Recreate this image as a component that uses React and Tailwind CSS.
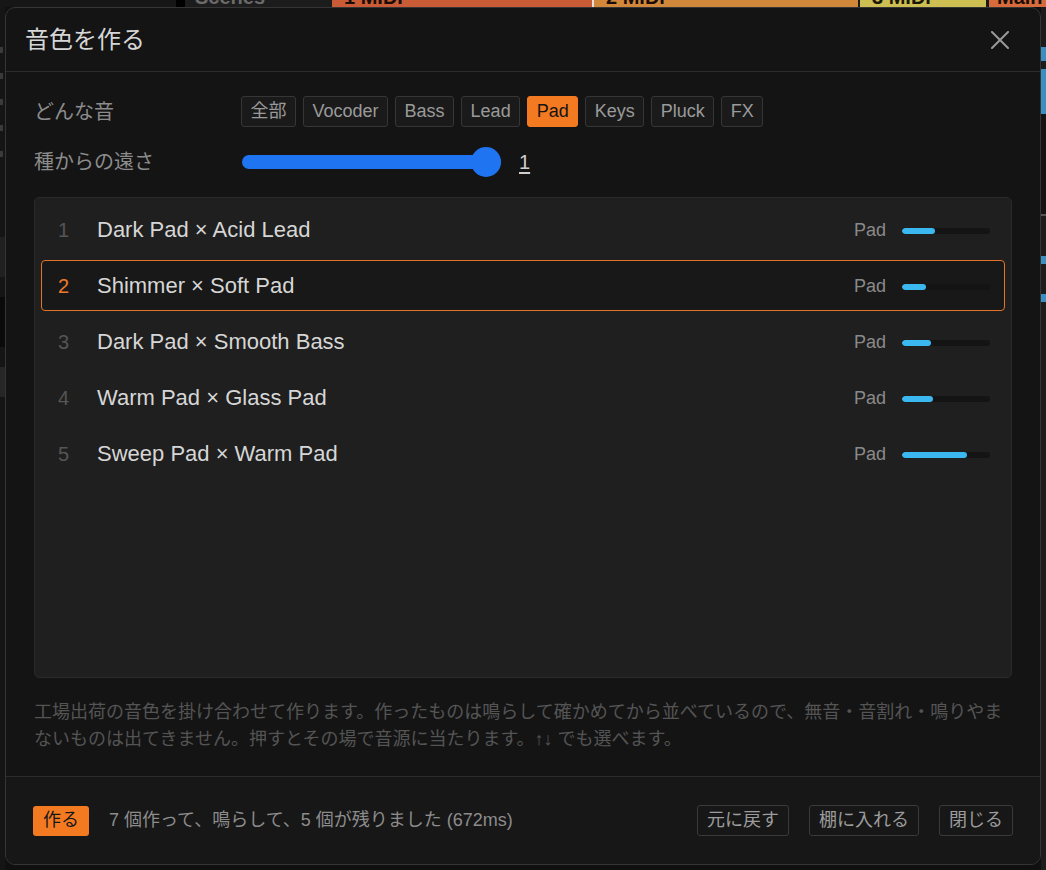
import React from "react";

const chips = ["全部", "Vocoder", "Bass", "Lead", "Pad", "Keys", "Pluck", "FX"];

const rows = [
  { n: 1, name: "Dark Pad × Acid Lead", fill: 33 },
  { n: 2, name: "Shimmer × Soft Pad", fill: 24, sel: true },
  { n: 3, name: "Dark Pad × Smooth Bass", fill: 29 },
  { n: 4, name: "Warm Pad × Glass Pad", fill: 31 },
  { n: 5, name: "Sweep Pad × Warm Pad", fill: 65 },
];

function TopStrip() {
  return (
    <div className="flex h-[7px] overflow-hidden bg-[#151515]">
      <div className="w-[176px] bg-[#161616]" />
      <div className="w-[9px] bg-black" />
      <div className="w-[147px] bg-[#1c1c1c] pl-[10px]">
        <div className="mt-[-13px] text-[20px] font-bold leading-[20px] text-[#6a6a6a]">Scenes</div>
      </div>
      <div className="w-[260px] bg-[#c95b37] pl-[12px]">
        <div className="mt-[-13px] text-[20px] font-bold leading-[20px] text-[#1a0d08]">1 MIDI</div>
      </div>
      <div className="w-[2px] bg-[#e8e0d8]" />
      <div className="w-[264px] bg-[#d2883b] pl-[12px]">
        <div className="mt-[-13px] text-[20px] font-bold leading-[20px] text-[#1a0d08]">2 MIDI</div>
      </div>
      <div className="w-[2px] bg-[#1a1a1a]" />
      <div className="w-[126px] bg-[#cdbf52] pl-[12px]">
        <div className="mt-[-13px] text-[20px] font-bold leading-[20px] text-[#1a1608]">3 MIDI</div>
      </div>
      <div className="w-[3px] bg-[#1a1a1a]" />
      <div className="flex-1 bg-[#d86b3b] pl-[8px]">
        <div className="mt-[-13px] text-[20px] font-bold leading-[20px] text-[#1a0d08]">Main</div>
      </div>
    </div>
  );
}

function SideStrips() {
  return (
    <div className="flex flex-1">
      <div className="flex w-[5px] flex-col gap-[20px] bg-[#151515] pt-[40px]">
        <div className="h-[6px] w-[3px] bg-[#3a3a3a]" />
        <div className="h-[6px] w-[3px] bg-[#3a3a3a]" />
        <div className="h-[6px] w-[3px] bg-[#3a3a3a]" />
        <div className="h-[6px] w-[3px] bg-[#3a3a3a]" />
        <div className="h-[6px] w-[3px] bg-[#3a3a3a]" />
        <div className="mt-[60px] h-[40px] w-[5px] bg-[#202020]" />
        <div className="h-[50px] w-[5px] bg-[#0a0a0a]" />
        <div className="h-[30px] w-[5px] bg-[#262626]" />
      </div>
      <div className="flex-1" />
      <div className="flex w-[5px] flex-col bg-[#1c1c1c]">
        <div className="h-[40px]" />
        <div className="h-[14px] bg-[#3a8fc0]" />
        <div className="h-[8px]" />
        <div className="h-[45px] bg-[#3a8fc0]" />
        <div className="h-[100px] bg-[#141414]" />
        <div className="h-[2px] bg-[#555]" />
        <div className="h-[40px]" />
        <div className="h-[8px] bg-[#3a8fc0]" />
        <div className="h-[30px]" />
        <div className="h-[8px] bg-[#3a8fc0]" />
      </div>
    </div>
  );
}

function CloseIcon() {
  return (
    <svg width="20" height="18" viewBox="0 0 20 18" fill="none" stroke="#9a9a9a" strokeWidth="2" strokeLinecap="round">
      <line x1="2" y1="1" x2="18" y2="17" />
      <line x1="18" y1="1" x2="2" y2="17" />
    </svg>
  );
}

export default function App() {
  return (
    <div className="relative flex h-[870px] w-[1046px] flex-col overflow-hidden bg-[#101010] font-['Liberation_Sans','Noto_Sans_CJK_JP',sans-serif]">
      <TopStrip />
      <SideStrips />

      <div className="absolute left-[5px] top-[7px] flex h-[858px] w-[1036px] flex-col overflow-hidden rounded-[10px] border border-[#353535] bg-[#141414]">
        {/* header */}
        <div className="flex h-[64px] shrink-0 items-center justify-between border-b border-[#2c2c2c] pl-[19px] pr-[30px]">
          <div className="text-[24px] leading-none text-[#d6d6d6]">音色を作る</div>
          <CloseIcon />
        </div>

        {/* body */}
        <div className="flex flex-1 flex-col px-[28px] pt-[24px]">
          <div className="flex h-[31px] items-center">
            <div className="w-[207px] text-[20px] text-[#8c8c8c]">どんな音</div>
            <div className="flex gap-[7px]">
              {chips.map((c) => (
                <div
                  key={c}
                  className={
                    c === "Pad"
                      ? "flex h-[31px] items-center rounded-[3px] border border-[#f47a22] bg-[#f47a22] px-[8.5px] text-[18px] text-[#141414]"
                      : "flex h-[31px] items-center rounded-[3px] border border-[#363636] bg-[#1a1a1a] px-[8.5px] text-[18px] text-[#9a9a9a]"
                  }
                >
                  {c}
                </div>
              ))}
            </div>
          </div>

          <div className="mt-[20px] flex h-[30px] items-center">
            <div className="w-[208px] text-[20px] text-[#8c8c8c]">種からの遠さ</div>
            <div className="relative flex h-[30px] w-[259px] items-center">
              <div className="h-[14px] w-full rounded-full bg-[#1f74f1]" />
              <div className="absolute right-0 top-0 h-[30px] w-[30px] rounded-full bg-[#1f74f1]" />
            </div>
            <div className="ml-[18px] text-[20px] leading-none text-[#cfcfcf] underline underline-offset-[3px]">1</div>
          </div>

          <div className="mt-[20px] flex h-[481px] flex-col gap-[5px] rounded-[5px] border border-[#2a2a2a] bg-[#1f1f1f] p-[6px]">
            {rows.map((r) => (
              <div
                key={r.n}
                className={
                  r.sel
                    ? "flex h-[51px] items-center rounded-[4px] border border-[#e2732a] bg-[#181818] pl-[16px] pr-[14px]"
                    : "flex h-[51px] items-center rounded-[4px] border border-transparent pl-[16px] pr-[14px]"
                }
              >
                <div className={r.sel ? "w-[39px] text-[20px] text-[#ee7a2c]" : "w-[39px] text-[20px] text-[#555555]"}>{r.n}</div>
                <div className="flex-1 text-[22px] text-[#d6d6d6]">{r.name}</div>
                <div className="pt-[2px] text-[18px] text-[#8a8a8a]">Pad</div>
                <div className="ml-[16px] mt-[2px] h-[6px] w-[88px] overflow-hidden rounded-full bg-[#141414]">
                  <div className="h-full rounded-full bg-[#3cb8f0]" style={{ width: r.fill + "px" }} />
                </div>
              </div>
            ))}
          </div>

          <p className="mt-[21px] whitespace-nowrap text-[18px] leading-[27px] text-[#545454]">
            工場出荷の音色を掛け合わせて作ります。作ったものは鳴らして確かめてから並べているので、無音・音割れ・鳴りやま
            <br />
            ないものは出てきません。押すとその場で音源に当たります。↑↓ でも選べます。
          </p>
        </div>

        {/* footer */}
        <div className="flex h-[88px] shrink-0 items-center border-t border-[#2c2c2c] bg-[#171717] px-[27px]">
          <div className="flex h-[30px] items-center rounded-[3px] bg-[#f47a22] px-[10px] text-[18px] text-[#161616]">作る</div>
          <div className="ml-[20px] flex-1 text-[18px] text-[#8c8c8c]">7 個作って、鳴らして、5 個が残りました (672ms)</div>
          <div className="flex gap-[20px]">
            {["元に戻す", "棚に入れる", "閉じる"].map((b) => (
              <div
                key={b}
                className="flex h-[31px] items-center rounded-[3px] border border-[#3a3a3a] bg-[#171717] px-[9px] text-[18px] text-[#9c9c9c]"
              >
                {b}
              </div>
            ))}
          </div>
        </div>
      </div>
    </div>
  );
}
